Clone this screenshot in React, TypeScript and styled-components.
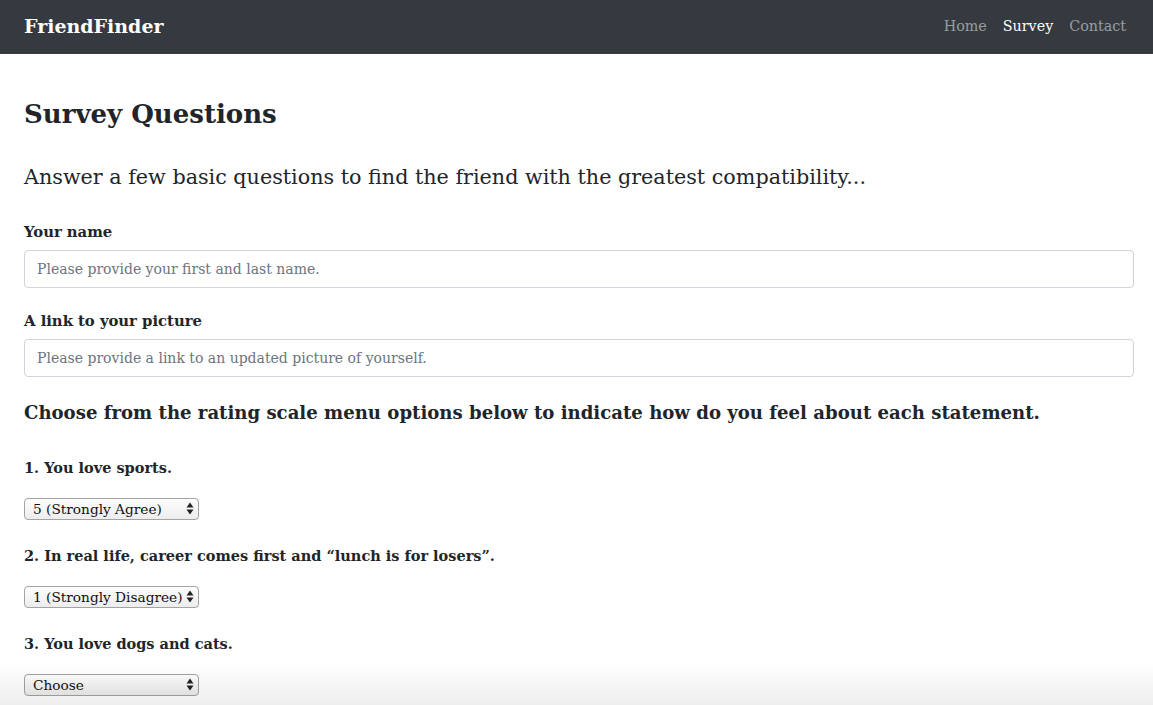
import React from "react";
import styled, { createGlobalStyle } from "styled-components";

const GlobalStyle = createGlobalStyle`
  html, body { margin: 0; padding: 0; background: #fff; }
  body { font-family: "DejaVu Serif", "Liberation Serif", serif; color: #212529; }
  * { box-sizing: border-box; }
`;

const Navbar = styled.nav`
  height: 54px;
  background: #343a40;
  display: flex;
  align-items: center;
  justify-content: space-between;
  padding: 0 27px 2px 24px;
`;

const Brand = styled.a`
  color: #fff;
  font-weight: bold;
  font-size: 19px;
  text-decoration: none;
`;

const NavLinks = styled.div`
  display: flex;
  gap: 16px;
`;

const NavLink = styled.a<{ $active?: boolean }>`
  color: ${(p) => (p.$active ? "#fff" : "rgba(255,255,255,0.5)")};
  font-size: 14.3px;
  text-decoration: none;
`;

const Main = styled.main`
  padding: 0 19px 40px 24px;
  display: flex;
  flex-direction: column;
`;

const Title = styled.h2`
  margin: 40px 0 0;
  font-size: 26px;
  line-height: 40px;
  font-weight: bold;
`;

const Lead = styled.h4`
  margin: 28px 0 0;
  font-size: 20.7px;
  line-height: 30px;
  font-weight: normal;
`;

const Field = styled.div`
  display: flex;
  flex-direction: column;
  margin-top: 28px;
  & + & { margin-top: 21px; }
`;

const Label = styled.label`
  font-weight: bold;
  font-size: 14.8px;
  line-height: 24px;
  margin-bottom: 6px;
`;

const Input = styled.input`
  height: 38px;
  width: 100%;
  border: 1px solid #ced4da;
  border-radius: 4px;
  padding: 0 12px;
  font-family: inherit;
  font-size: 14px;
  color: #495057;
  &::placeholder { color: #6c757d; }
`;

const Instruction = styled.h5`
  margin: 22px 0 0;
  font-size: 18.1px;
  line-height: 28px;
  font-weight: bold;
`;

const Question = styled.div`
  display: flex;
  flex-direction: column;
  margin-top: 29px;
  & + & { margin-top: 24px; }
`;

const QuestionText = styled.h6`
  margin: 0 0 18px;
  font-size: 14.5px;
  line-height: 24px;
  font-weight: bold;
`;

const SelectWrap = styled.div`
  position: relative;
  width: 175px;
  height: 22px;
`;

const Select = styled.select`
  appearance: none;
  -webkit-appearance: none;
  width: 100%;
  height: 100%;
  border: 1px solid #a3a3a3;
  border-radius: 4px;
  background: linear-gradient(#fdfdfd, #ededed);
  font-family: inherit;
  font-size: 13.7px;
  color: #111;
  padding: 0 14px 1px 8px;
  outline: none;
`;

const Arrows = styled.svg`
  position: absolute;
  right: 5px;
  top: 4px;
  pointer-events: none;
`;

const BottomFade = styled.div`
  position: fixed;
  left: 0;
  right: 0;
  bottom: 0;
  height: 42px;
  background: linear-gradient(rgba(0,0,0,0), rgba(0,0,0,0.065));
  pointer-events: none;
`;

const options = [
  "Choose",
  "1 (Strongly Disagree)",
  "2",
  "3",
  "4",
  "5 (Strongly Agree)",
];

const questions = [
  { text: "1. You love sports.", value: "5 (Strongly Agree)" },
  { text: "2. In real life, career comes first and \u201Clunch is for losers\u201D.", value: "1 (Strongly Disagree)" },
  { text: "3. You love dogs and cats.", value: "Choose" },
];

function RatingSelect({ value }: { value: string }) {
  return (
    <SelectWrap>
      <Select defaultValue={value}>
        {options.map((o) => (
          <option key={o} value={o}>{o}</option>
        ))}
      </Select>
      <Arrows width="8" height="13" viewBox="0 0 8 13">
        <path d="M4 0.5 L7.5 5.5 L0.5 5.5 Z" fill="#222" />
        <path d="M4 12.5 L7.5 7.5 L0.5 7.5 Z" fill="#222" />
      </Arrows>
    </SelectWrap>
  );
}

export default function App() {
  return (
    <>
      <GlobalStyle />
      <Navbar>
        <Brand href="#">FriendFinder</Brand>
        <NavLinks>
          <NavLink href="#">Home</NavLink>
          <NavLink href="#" $active>Survey</NavLink>
          <NavLink href="#">Contact</NavLink>
        </NavLinks>
      </Navbar>
      <Main>
        <Title>Survey Questions</Title>
        <Lead>Answer a few basic questions to find the friend with the greatest compatibility...</Lead>
        <Field>
          <Label>Your name</Label>
          <Input placeholder="Please provide your first and last name." />
        </Field>
        <Field>
          <Label>A link to your picture</Label>
          <Input placeholder="Please provide a link to an updated picture of yourself." />
        </Field>
        <Instruction>Choose from the rating scale menu options below to indicate how do you feel about each statement.</Instruction>
        {questions.map((q) => (
          <Question key={q.text}>
            <QuestionText>{q.text}</QuestionText>
            <RatingSelect value={q.value} />
          </Question>
        ))}
      </Main>
      <BottomFade />
    </>
  );
}
